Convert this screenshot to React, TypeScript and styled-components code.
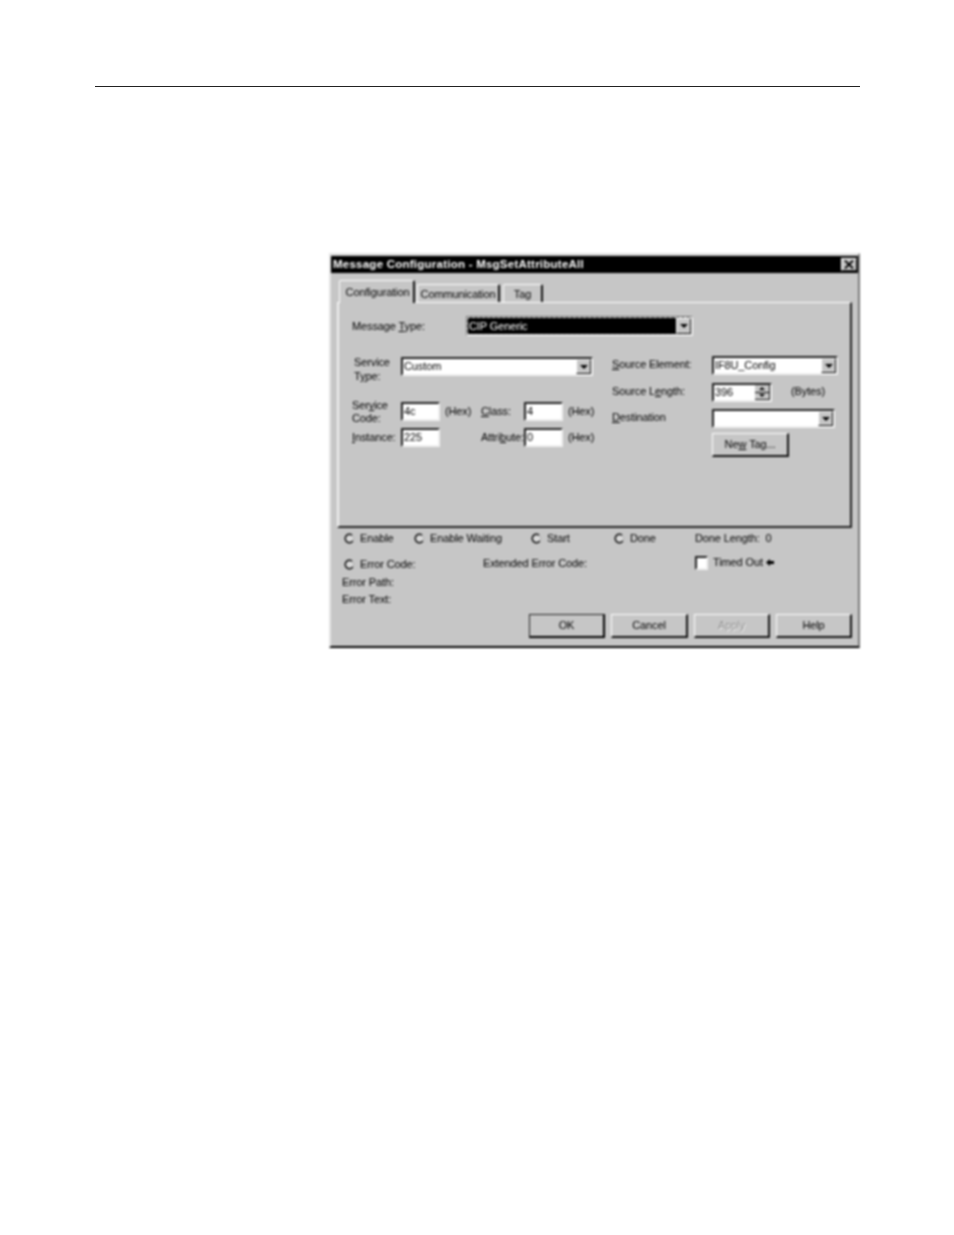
import React from "react";
import styled, { createGlobalStyle } from "styled-components";

const Global = createGlobalStyle`
  html, body { margin: 0; padding: 0; background: #fff; }
  body { font-family: "Liberation Sans", Arial, sans-serif; }
`;

const Page = styled.div`
  width: 954px;
  height: 1235px;
  padding-top: 86px;
  box-sizing: border-box;
  overflow: hidden;
`;
const Rule = styled.div`
  width: 765px;
  height: 1px;
  margin-left: 95px;
  background: #222;
`;
const Dialog = styled.div`
  width: 531px;
  height: 395px;
  margin: 166px 0 0 329px;
  box-sizing: border-box;
  background: #c6c6c6;
  color: #000;
  font-size: 11px;
  line-height: 13px;
  border-top: 2px solid #e4e4e4;
  border-left: 2px solid #e4e4e4;
  border-right: 2px solid #777;
  border-bottom: 2px solid #000;
  filter: blur(0.8px);
  letter-spacing: -0.12px;
`;
const TitleBar = styled.div`
  height: 17px;
  margin-top: 1px;
  background: #000;
  color: #fff;
  font-weight: 700;
  font-size: 11.5px;
  letter-spacing: 0.24px;
  padding: 0 2px;
  display: flex;
  align-items: center;
  justify-content: space-between;
`;
const CloseBtn = styled.div`
  width: 16px;
  height: 13px;
  background: #c6c6c6;
  border: 1px solid;
  border-color: #fff #222 #222 #fff;
  box-sizing: border-box;
  margin-right: -1px;
  display: flex;
  align-items: center;
  justify-content: center;
`;
const TabRow = styled.div`
  display: flex;
  align-items: flex-end;
  height: 22px;
  margin: 7px 0 0 8px;
  position: relative;
  z-index: 1;
`;
const Tab = styled.div<{ $active?: boolean; $w: number }>`
  width: ${(p) => p.$w}px;
  height: ${(p) => (p.$active ? 23 : 18)}px;
  margin-right: ${(p) => (p.$active ? 2 : 3)}px;
  margin-bottom: ${(p) => (p.$active ? -1 : 0)}px;
  box-sizing: border-box;
  background: #c6c6c6;
  border-top: 1px solid #fff;
  border-left: 1px solid #fff;
  border-right: 2px solid #111;
  border-radius: 2px 2px 0 0;
  display: flex;
  align-items: center;
  justify-content: center;
  padding-top: ${(p) => (p.$active ? 0 : 1)}px;
  padding-left: ${(p) => (p.$active ? 2 : 0)}px;
`;
const Panel = styled.div`
  width: 515px;
  height: 226px;
  margin-left: 6px;
  box-sizing: border-box;
  border-top: 1px solid #fff;
  border-left: 2px solid #f0f0f0;
  border-right: 2px solid #222;
  border-bottom: 2px solid #222;
  padding-top: 13px;
`;
const MessageRow = styled.div`
  display: flex;
  align-items: center;
  padding-left: 13px;
  height: 20px;
`;
const Label = styled.span<{ $w?: number }>`
  display: block;
  flex: none;
  ${(p) => (p.$w ? `width: ${p.$w}px;` : "")}
`;
const RightLabel = styled(Label)`
  padding-bottom: 3px;
`;
const Combo = styled.div<{ $w: number; $h?: number; $selected?: boolean }>`
  width: ${(p) => p.$w}px;
  height: ${(p) => p.$h ?? 19}px;
  box-sizing: border-box;
  flex: none;
  display: flex;
  align-items: center;
  justify-content: space-between;
  background: ${(p) => (p.$selected ? "#000" : "#fff")};
  color: ${(p) => (p.$selected ? "#fff" : "#000")};
  border: 2px solid;
  border-color: ${(p) => (p.$selected ? "#777 #f0f0f0 #f0f0f0 #777" : "#222 #f0f0f0 #f0f0f0 #222")};
  padding-left: 1px;
  outline: ${(p) => (p.$selected ? "1px dashed #ddd" : "none")};
  outline-offset: -2px;
`;
const ComboArrow = styled.div`
  width: 15px;
  height: 100%;
  background: #c6c6c6;
  box-sizing: border-box;
  border: 1px solid;
  border-color: #fff #111 #111 #fff;
  display: flex;
  align-items: center;
  justify-content: center;
  flex: none;
`;
const Caret = styled.div`
  width: 0;
  height: 0;
  border-left: 4px solid transparent;
  border-right: 4px solid transparent;
  border-top: 4px solid #000;
`;
const Columns = styled.div`
  display: flex;
  margin-top: 20px;
`;
const LeftCol = styled.div`
  width: 273px;
  flex: none;
  padding-top: 1px;
`;
const RightCol = styled.div`
  flex: 1;
`;
const ServiceRow = styled.div`
  display: flex;
  align-items: center;
  padding-left: 15px;
  height: 19px;
  margin-bottom: 26px;
`;
const TwoLine = styled.span`
  display: block;
  width: 47px;
  flex: none;
  line-height: 14px;
  margin-top: 5px;
`;
const FieldRow = styled.div`
  display: grid;
  grid-template-columns: 49px 39px 41px 43px 39px auto;
  grid-template-rows: 19px;
  padding-left: 13px;
  height: 19px;
  align-items: center;
  margin-bottom: 7px;
`;
const CodeLabel = styled.span`
  display: block;
`;
const TextInput = styled.div`
  height: 19px;
  box-sizing: border-box;
  background: #fff;
  border: 2px solid;
  border-color: #222 #f0f0f0 #f0f0f0 #222;
  padding-left: 1px;
  display: flex;
  align-items: center;
`;
const Hex = styled.span`
  padding-left: 5px;
`;
const RightRow = styled.div<{ $mb: number }>`
  display: flex;
  align-items: center;
  height: 19px;
  margin-bottom: ${(p) => p.$mb}px;
`;
const Spin = styled.div`
  display: flex;
  flex-direction: column;
  width: 15px;
  height: 100%;
  flex: none;
`;
const SpinPart = styled.div`
  flex: 1;
  background: #c6c6c6;
  display: flex;
  align-items: center;
  justify-content: center;
  border-bottom: 1px solid #111;
  border-right: 1px solid #111;
`;
const SpinUp = styled.div`
  width: 0;
  height: 0;
  border-left: 3px solid transparent;
  border-right: 3px solid transparent;
  border-bottom: 3px solid #000;
`;
const SpinDown = styled.div`
  width: 0;
  height: 0;
  border-left: 3px solid transparent;
  border-right: 3px solid transparent;
  border-top: 3px solid #000;
`;
const Bytes = styled.span`
  margin-left: 19px;
  padding-bottom: 3px;
`;
const Button = styled.div<{ $disabled?: boolean; $default?: boolean; $w?: number }>`
  width: ${(p) => p.$w ?? 76}px;
  height: 24px;
  box-sizing: border-box;
  background: #c6c6c6;
  border: 1px solid;
  border-color: ${(p) => (p.$default ? "#222 #000 #000 #222" : "#fff #111 #111 #fff")};
  border-right-width: 2px;
  border-bottom-width: 2px;
  display: flex;
  align-items: center;
  justify-content: center;
  color: ${(p) => (p.$disabled ? "#8e8e8e" : "#000")};
  text-shadow: ${(p) => (p.$disabled ? "1px 1px 0 #f0f0f0" : "none")};
  flex: none;
`;
const NewTagButton = styled(Button)`
  margin-left: 100px;
  width: 77px;
`;
const StatusRow = styled.div<{ $mt: number }>`
  display: flex;
  align-items: center;
  height: 13px;
  margin-top: ${(p) => p.$mt}px;
  padding-left: 13px;
`;
const StatusItem = styled.div<{ $w: number }>`
  width: ${(p) => p.$w}px;
  flex: none;
  display: flex;
  align-items: center;
  gap: 5px;
`;
const ExtendedItem = styled(StatusItem)`
  padding-bottom: 2px;
`;
const TimedOut = styled.div`
  display: flex;
  align-items: center;
  margin-bottom: 4px;
`;
const ErrorLine = styled.div<{ $mt: number }>`
  margin-top: ${(p) => p.$mt}px;
  padding-left: 11px;
  height: 13px;
`;
const CheckBox = styled.div`
  width: 13px;
  height: 14px;
  box-sizing: border-box;
  background: #fff;
  border: 2px solid;
  border-color: #222 #f0f0f0 #f0f0f0 #222;
  flex: none;
  margin-right: 5px;
`;
const Buttons = styled.div`
  display: flex;
  justify-content: flex-end;
  gap: 6px;
  padding-right: 6px;
  margin-top: 8px;
`;

const Radio = () => (
  <svg width="11" height="11" viewBox="0 0 11 11" style={{ flex: "none" }}>
    <circle cx="5.5" cy="5.5" r="4.2" fill="#dadada" stroke="#b4b4b4" strokeWidth="1.3" />
    <path d="M8 2.2A4.2 4.2 0 1 0 8.8 8" fill="none" stroke="#111" strokeWidth="1.5" />
  </svg>
);

const ArrowMark = () => (
  <svg width="8" height="7" viewBox="0 0 8 7" style={{ marginLeft: 3, flex: "none" }}>
    <path d="M0 3.5L4 0V2H8V5H4V7Z" fill="#000" />
  </svg>
);

const CloseGlyph = () => (
  <svg width="10" height="9" viewBox="0 0 10 9">
    <path d="M1 0.5L9 8.5M9 0.5L1 8.5" stroke="#000" strokeWidth="1.8" fill="none" />
  </svg>
);

const Drop = () => (
  <ComboArrow>
    <Caret />
  </ComboArrow>
);

export default function App() {
  return (
    <>
      <Global />
      <Page>
        <Rule />
        <Dialog>
          <TitleBar>
            <span>Message Configuration - MsgSetAttributeAll</span>
            <CloseBtn>
              <CloseGlyph />
            </CloseBtn>
          </TitleBar>
          <TabRow>
            <Tab $active $w={76}>Configuration</Tab>
            <Tab $w={83}>Communication</Tab>
            <Tab $w={40}>Tag</Tab>
          </TabRow>
          <Panel>
            <MessageRow>
              <Label $w={114}>Message <u>T</u>ype:</Label>
              <Combo $w={227} $h={20} $selected>
                <span>CIP Generic</span>
                <Drop />
              </Combo>
            </MessageRow>
            <Columns>
              <LeftCol>
                <ServiceRow>
                  <TwoLine>Service<br />T<u>y</u>pe:</TwoLine>
                  <Combo $w={192}>
                    <span>Custom</span>
                    <Drop />
                  </Combo>
                </ServiceRow>
                <FieldRow>
                  <CodeLabel>Ser<u>v</u>ice<br />Code:</CodeLabel>
                  <TextInput>4c</TextInput>
                  <Hex>(Hex)</Hex>
                  <Label><u>C</u>lass:</Label>
                  <TextInput>4</TextInput>
                  <Hex>(Hex)</Hex>
                </FieldRow>
                <FieldRow>
                  <Label><u>I</u>nstance:</Label>
                  <TextInput>225</TextInput>
                  <span />
                  <Label>Attri<u>b</u>ute:</Label>
                  <TextInput>0</TextInput>
                  <Hex>(Hex)</Hex>
                </FieldRow>
              </LeftCol>
              <RightCol>
                <RightRow $mb={8}>
                  <RightLabel $w={100}><u>S</u>ource Element:</RightLabel>
                  <Combo $w={126}>
                    <span>IF8U_Config</span>
                    <Drop />
                  </Combo>
                </RightRow>
                <RightRow $mb={7}>
                  <RightLabel $w={100}>Source L<u>e</u>ngth:</RightLabel>
                  <Combo $w={60}>
                    <span>396</span>
                    <Spin>
                      <SpinPart><SpinUp /></SpinPart>
                      <SpinPart><SpinDown /></SpinPart>
                    </Spin>
                  </Combo>
                  <Bytes>(Bytes)</Bytes>
                </RightRow>
                <RightRow $mb={5}>
                  <RightLabel $w={100}><u>D</u>estination</RightLabel>
                  <Combo $w={123}>
                    <span />
                    <Drop />
                  </Combo>
                </RightRow>
                <NewTagButton>Ne<u>w</u>&nbsp;Tag...</NewTagButton>
              </RightCol>
            </Columns>
          </Panel>
          <StatusRow $mt={4}>
            <StatusItem $w={70}><Radio />Enable</StatusItem>
            <StatusItem $w={117}><Radio />Enable Waiting</StatusItem>
            <StatusItem $w={83}><Radio />Start</StatusItem>
            <StatusItem $w={81}><Radio />Done</StatusItem>
            <StatusItem $w={90}>Done Length:&nbsp; 0</StatusItem>
          </StatusRow>
          <StatusRow $mt={13}>
            <StatusItem $w={139}><Radio />Error Code:</StatusItem>
            <ExtendedItem $w={212}>Extended Error Code:</ExtendedItem>
            <TimedOut>
              <CheckBox />
              Timed Out
              <ArrowMark />
            </TimedOut>
          </StatusRow>
          <ErrorLine $mt={5}>Error Path:</ErrorLine>
          <ErrorLine $mt={4}>Error Text:</ErrorLine>
          <Buttons>
            <Button $default>OK</Button>
            <Button $w={77}>Cancel</Button>
            <Button $disabled>Apply</Button>
            <Button>Help</Button>
          </Buttons>
        </Dialog>
      </Page>
    </>
  );
}
